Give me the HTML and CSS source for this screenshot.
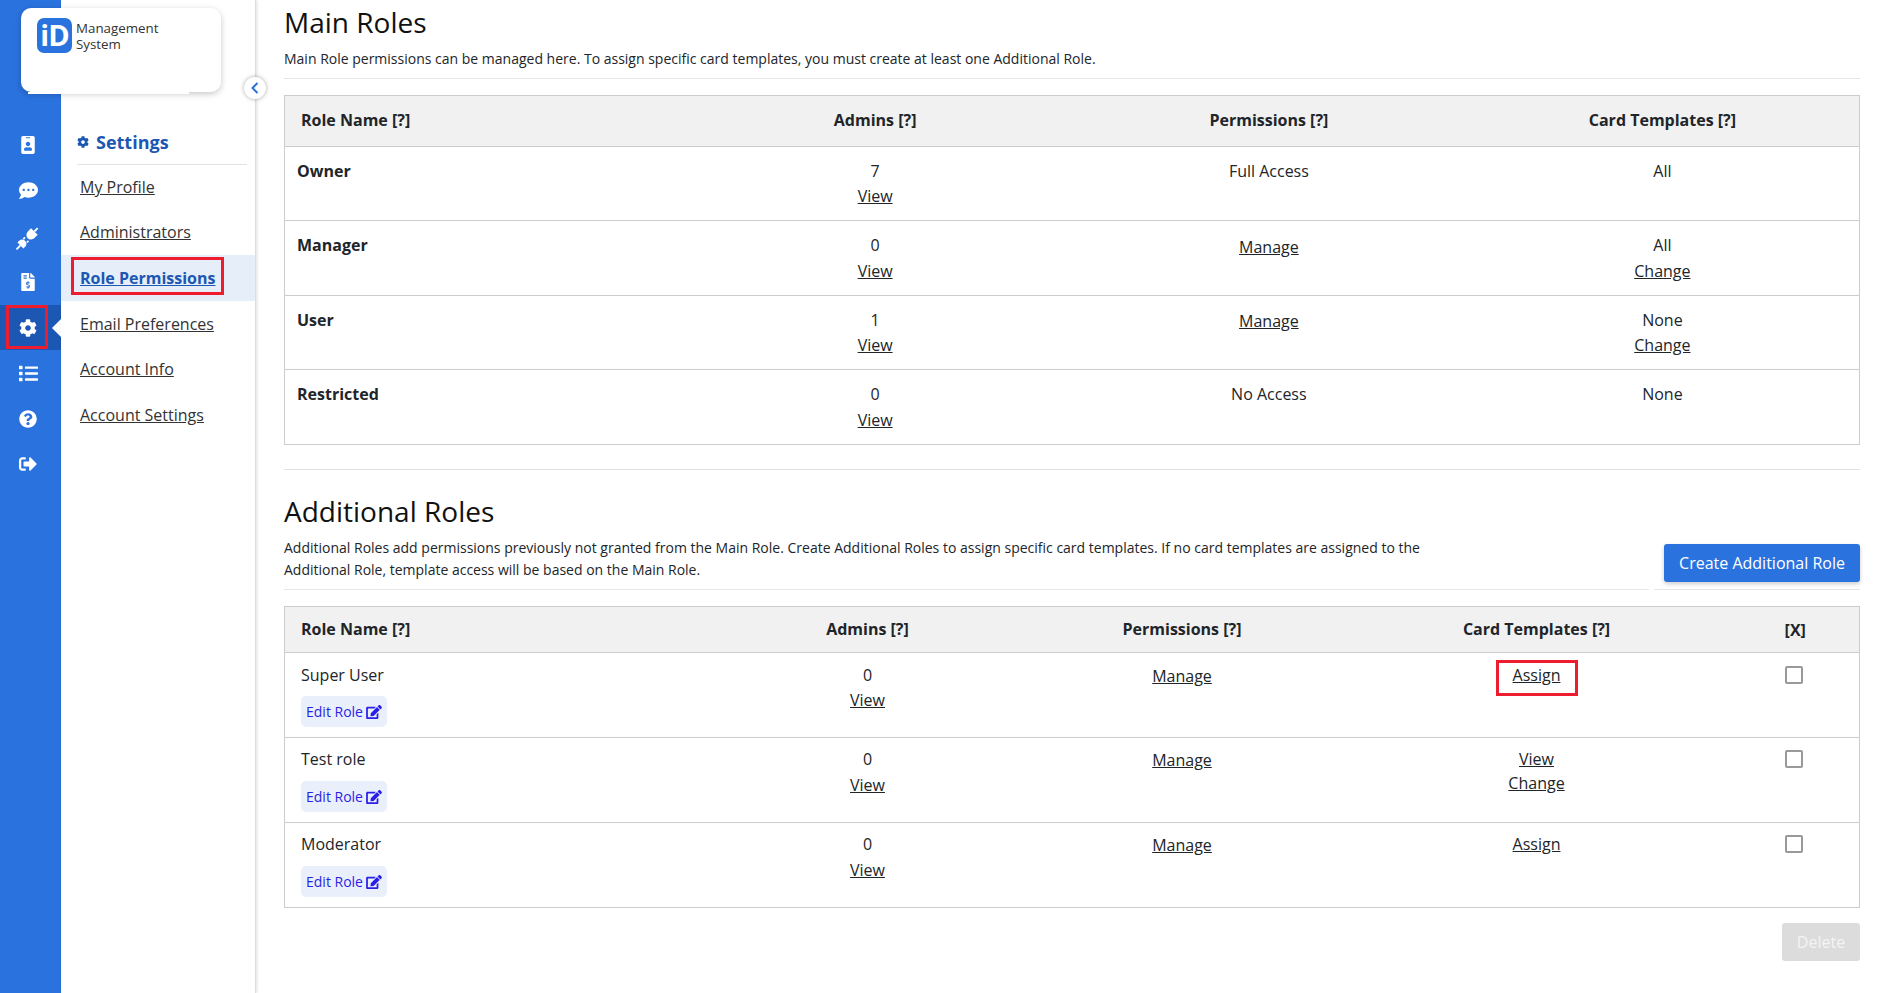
FILE: index.html
```html
<!DOCTYPE html>
<html lang="en">
<head>
<meta charset="utf-8">
<title>Role Permissions</title>
<link rel="stylesheet" href="styles.css">
</head>
<body>
<div class="app">
  <div class="brand">
    <span class="brand-mark">iD</span>
    <span class="brand-name">Management<br>System</span>
  </div>
  <nav class="rail">
    <a class="rail-item"><svg class="ico" viewBox="0 0 384 512"><path d="M336 0H48C21.5 0 0 21.5 0 48v416c0 26.5 21.5 48 48 48h288c26.5 0 48-21.5 48-48V48c0-26.5-21.5-48-48-48zM144 32h96c8.8 0 16 7.2 16 16s-7.2 16-16 16h-96c-8.8 0-16-7.2-16-16s7.2-16 16-16zm48 128c35.3 0 64 28.7 64 64s-28.7 64-64 64-64-28.7-64-64 28.7-64 64-64zm112 236.8c0 10.6-10 19.2-22.4 19.2H102.4C90 416 80 407.4 80 396.8v-19.2c0-31.8 30.1-57.6 67.2-57.6h5c12.3 5.1 25.7 8 39.8 8s27.6-2.9 39.8-8h5c37.1 0 67.2 25.8 67.2 57.6v19.2z"/></svg></a>
    <a class="rail-item"><svg class="ico ico-wide" viewBox="0 0 512 512"><path d="M256 32C114.6 32 0 125.1 0 240c0 49.6 21.4 95 57 130.7C44.5 421.1 2.7 466 2.2 466.5c-2.2 2.3-2.8 5.7-1.5 8.7S4.8 480 8 480c66.3 0 116-31.8 140.6-51.4 32.7 12.3 69 19.4 107.4 19.4 141.4 0 256-93.1 256-208S397.4 32 256 32zM128 272c-17.7 0-32-14.3-32-32s14.3-32 32-32 32 14.3 32 32-14.3 32-32 32zm128 0c-17.7 0-32-14.3-32-32s14.3-32 32-32 32 14.3 32 32-14.3 32-32 32zm128 0c-17.7 0-32-14.3-32-32s14.3-32 32-32 32 14.3 32 32-14.3 32-32 32z"/></svg></a>
    <a class="rail-item"><svg class="ico ico-plug" viewBox="-4 -4 32 32"><g transform="translate(-1 3) rotate(-45 12 12)"><rect x="-4" y="11" width="6" height="2"/><path d="M2 7.5h3c2 0 4 1.500 4 4.500s-2 4.500-4 4.500H2z"/><rect x="9" y="8.500" width="2.500" height="1.800"/><rect x="9" y="13.700" width="2.500" height="1.800"/><path d="M23 7h-4.500c-3 0-5.500 2-5.500 5s2.500 5 5.500 5H23z"/><rect x="23" y="11" width="5" height="2"/></g></svg></a>
    <a class="rail-item"><svg class="ico" viewBox="0 0 384 512"><path d="M377 105L279.1 7c-4.500-4.500-10.600-7-17-7H256v128h128v-6.100c0-6.300-2.500-12.400-7-16.900zm-153 31V0H24C10.700 0 0 10.700 0 24v464c0 13.300 10.700 24 24 24h336c13.300 0 24-10.700 24-24V160H248c-13.200 0-24-10.800-24-24zM64 72c0-4.420 3.580-8 8-8h80c4.420 0 8 3.580 8 8v16c0 4.420-3.580 8-8 8H72c-4.420 0-8-3.580-8-8V72zm0 80v-16c0-4.420 3.580-8 8-8h80c4.420 0 8 3.580 8 8v16c0 4.420-3.580 8-8 8H72c-4.420 0-8-3.580-8-8zm144 263.880V440c0 4.420-3.580 8-8 8h-16c-4.420 0-8-3.580-8-8v-24.290c-11.290-.58-22.270-4.520-31.370-11.350-3.900-2.930-4.100-8.770-.57-12.140l11.750-11.210c2.770-2.640 6.890-2.760 10.130-.73 3.870 2.420 8.260 3.720 12.820 3.720h28.110c6.500 0 11.800-5.920 11.800-13.190 0-5.950-3.610-11.190-8.770-12.730l-45-13.500c-18.590-5.580-31.580-23.420-31.580-43.390 0-24.520 19.050-44.440 42.670-45.070V240c0-4.420 3.580-8 8-8h16c4.420 0 8 3.580 8 8v24.290c11.290.58 22.270 4.510 31.370 11.350 3.900 2.930 4.100 8.770.57 12.140l-11.750 11.210c-2.770 2.640-6.890 2.760-10.130.73-3.870-2.430-8.260-3.720-12.820-3.720h-28.110c-6.500 0-11.800 5.920-11.800 13.190 0 5.950 3.610 11.190 8.770 12.730l45 13.500c18.590 5.580 31.580 23.420 31.580 43.390 0 24.530-19.050 44.440-42.670 45.070z"/></svg></a>
    <a class="rail-item is-active"><svg class="ico" viewBox="0 0 512 512"><path d="M487.400 315.700l-42.600-24.600c4.300-23.200 4.300-47 0-70.200l42.600-24.600c4.900-2.800 7.100-8.600 5.500-14-11.100-35.600-30-67.800-54.700-94.600-3.800-4.100-10-5.100-14.800-2.300L380.800 110c-17.900-15.400-38.500-27.300-60.800-35.100V25.800c0-5.600-3.900-10.500-9.400-11.700-36.700-8.200-74.300-7.800-109.200 0-5.500 1.200-9.400 6.100-9.400 11.700V75c-22.200 7.900-42.800 19.800-60.800 35.100L88.700 85.500c-4.900-2.800-11-1.900-14.800 2.300-24.700 26.700-43.600 58.900-54.700 94.600-1.700 5.400.6 11.200 5.500 14L67.300 221c-4.300 23.200-4.300 47 0 70.200l-42.600 24.600c-4.900 2.800-7.100 8.600-5.500 14 11.100 35.600 30 67.800 54.700 94.600 3.800 4.100 10 5.100 14.800 2.300l42.600-24.600c17.900 15.400 38.500 27.300 60.800 35.100v49.200c0 5.600 3.900 10.500 9.400 11.700 36.700 8.200 74.300 7.800 109.200 0 5.500-1.200 9.400-6.100 9.400-11.700v-49.200c22.200-7.900 42.800-19.800 60.800-35.100l42.600 24.600c4.900 2.800 11 1.900 14.800-2.300 24.700-26.700 43.600-58.900 54.700-94.600 1.500-5.500-.7-11.300-5.600-14.100zM256 336c-44.100 0-80-35.900-80-80s35.900-80 80-80 80 35.900 80 80-35.900 80-80 80z"/></svg></a>
    <a class="rail-item"><svg class="ico ico-wide" viewBox="0 0 512 512"><path d="M80 368H16a16 16 0 0 0-16 16v64a16 16 0 0 0 16 16h64a16 16 0 0 0 16-16v-64a16 16 0 0 0-16-16zm0-320H16A16 16 0 0 0 0 64v64a16 16 0 0 0 16 16h64a16 16 0 0 0 16-16V64a16 16 0 0 0-16-16zm0 160H16a16 16 0 0 0-16 16v64a16 16 0 0 0 16 16h64a16 16 0 0 0 16-16v-64a16 16 0 0 0-16-16zm416 176H176a16 16 0 0 0-16 16v32a16 16 0 0 0 16 16h320a16 16 0 0 0 16-16v-32a16 16 0 0 0-16-16zm0-320H176a16 16 0 0 0-16 16v32a16 16 0 0 0 16 16h320a16 16 0 0 0 16-16V80a16 16 0 0 0-16-16zm0 160H176a16 16 0 0 0-16 16v32a16 16 0 0 0 16 16h320a16 16 0 0 0 16-16v-32a16 16 0 0 0-16-16z"/></svg></a>
    <a class="rail-item"><svg class="ico" viewBox="0 0 512 512"><path d="M504 256c0 136.997-111.043 248-248 248S8 392.997 8 256C8 119.083 119.043 8 256 8s248 111.083 248 248zM262.655 90c-54.497 0-89.255 22.957-116.549 63.758-3.536 5.286-2.353 12.415 2.715 16.258l34.699 26.310c5.205 3.947 12.621 3.008 16.665-2.122 17.864-22.658 30.113-35.797 57.303-35.797 20.429 0 45.698 13.148 45.698 32.958 0 14.976-12.363 22.667-32.534 33.976C247.128 238.528 216 254.941 216 296v4c0 6.627 5.373 12 12 12h56c6.627 0 12-5.373 12-12v-1.333c0-28.462 83.186-29.647 83.186-106.667 0-58.002-60.165-102-116.531-102zM256 338c-25.365 0-46 20.635-46 46 0 25.364 20.635 46 46 46s46-20.636 46-46c0-25.365-20.635-46-46-46z"/></svg></a>
    <a class="rail-item"><svg class="ico" viewBox="0 0 512 512"><path d="M497 273L329 441c-15 15-41 4.500-41-17v-96H152c-13.300 0-24-10.700-24-24v-96c0-13.300 10.700-24 24-24h136V88c0-21.400 25.900-32 41-17l168 168c9.300 9.400 9.300 24.600 0 34zM192 436v-40c0-6.600-5.400-12-12-12H96c-17.700 0-32-14.300-32-32V160c0-17.700 14.300-32 32-32h84c6.600 0 12-5.400 12-12V76c0-6.600-5.400-12-12-12H96c-53 0-96 43-96 96v192c0 53 43 96 96 96h84c6.600 0 12-5.400 12-12z"/></svg></a>
  </nav>

  <aside class="subnav">
    <button class="collapse" type="button" aria-label="Collapse"><svg viewBox="0 0 10 14"><path d="M7.500 2 2.500 7l5 5"/></svg></button>
    <h2 class="subnav-title"><svg class="title-ico" viewBox="0 0 512 512"><path d="M487.400 315.700l-42.600-24.600c4.300-23.200 4.300-47 0-70.200l42.600-24.600c4.900-2.800 7.100-8.600 5.500-14-11.100-35.600-30-67.800-54.700-94.600-3.800-4.100-10-5.100-14.800-2.300L380.800 110c-17.900-15.400-38.500-27.300-60.800-35.100V25.800c0-5.600-3.900-10.500-9.400-11.700-36.700-8.200-74.300-7.800-109.200 0-5.500 1.200-9.400 6.100-9.400 11.700V75c-22.200 7.900-42.800 19.800-60.800 35.100L88.700 85.500c-4.900-2.800-11-1.900-14.800 2.300-24.700 26.700-43.600 58.900-54.700 94.600-1.700 5.400.6 11.200 5.500 14L67.300 221c-4.300 23.200-4.300 47 0 70.200l-42.600 24.600c-4.900 2.800-7.100 8.600-5.500 14 11.100 35.600 30 67.800 54.700 94.600 3.800 4.100 10 5.100 14.800 2.300l42.600-24.600c17.900 15.400 38.500 27.300 60.800 35.100v49.200c0 5.600 3.900 10.500 9.400 11.700 36.700 8.200 74.300 7.800 109.200 0 5.500-1.200 9.400-6.100 9.400-11.700v-49.200c22.200-7.900 42.800-19.800 60.800-35.100l42.600 24.600c4.900 2.800 11 1.900 14.800-2.300 24.700-26.700 43.600-58.900 54.700-94.600 1.500-5.500-.7-11.300-5.600-14.100zM256 336c-44.100 0-80-35.900-80-80s35.900-80 80-80 80 35.900 80 80-35.900 80-80 80z"/></svg>Settings</h2>
    <ul class="subnav-list">
      <li class="subnav-item"><a href="#">My Profile</a></li>
      <li class="subnav-item"><a href="#">Administrators</a></li>
      <li class="subnav-item is-current"><a href="#">Role Permissions</a></li>
      <li class="subnav-item"><a href="#">Email Preferences</a></li>
      <li class="subnav-item"><a href="#">Account Info</a></li>
      <li class="subnav-item"><a href="#">Account Settings</a></li>
    </ul>
  </aside>

  <main class="main">
    <h1 class="title title-first">Main Roles</h1>
    <p class="lead lead-first">Main Role permissions can be managed here. To assign specific card templates, you must create at least one Additional Role.</p>

    <table class="grid grid-main">
      <thead>
        <tr><th class="name">Role Name [?]</th><th>Admins [?]</th><th>Permissions [?]</th><th>Card Templates [?]</th></tr>
      </thead>
      <tbody>
        <tr>
          <td class="role">Owner</td>
          <td>7<a class="line" href="#">View</a></td>
          <td>Full Access</td>
          <td>All</td>
        </tr>
        <tr>
          <td class="role">Manager</td>
          <td>0<a class="line" href="#">View</a></td>
          <td><a class="line low" href="#">Manage</a></td>
          <td>All<a class="line" href="#">Change</a></td>
        </tr>
        <tr>
          <td class="role">User</td>
          <td>1<a class="line" href="#">View</a></td>
          <td><a class="line low" href="#">Manage</a></td>
          <td>None<a class="line" href="#">Change</a></td>
        </tr>
        <tr>
          <td class="role">Restricted</td>
          <td>0<a class="line" href="#">View</a></td>
          <td>No Access</td>
          <td>None</td>
        </tr>
      </tbody>
    </table>

    <hr class="divider">

    <h2 class="title">Additional Roles</h2>
    <div class="intro">
      <p class="lead intro-text">Additional Roles add permissions previously not granted from the Main Role. Create Additional Roles to assign specific card templates. If no card templates are assigned to the Additional Role, template access will be based on the Main Role.</p>
      <div class="intro-action"><button class="btn btn-primary" type="button">Create Additional Role</button></div>
    </div>

    <table class="grid grid-extra">
      <thead>
        <tr><th class="name">Role Name [?]</th><th>Admins [?]</th><th>Permissions [?]</th><th>Card Templates [?]</th><th class="x">[X]</th></tr>
      </thead>
      <tbody>
        <tr>
          <td class="name">Super User<a class="edit" href="#">Edit Role<svg class="edit-ico" viewBox="0 0 576 512"><path d="M402.600 83.200l90.200 90.200c3.800 3.800 3.800 10 0 13.800L274.400 405.600l-92.800 10.300c-12.400 1.400-22.900-9.100-21.500-21.500l10.300-92.800L388.800 83.200c3.800-3.800 10-3.800 13.800 0zm162-22.900l-48.800-48.800c-15.200-15.200-39.900-15.200-55.200 0l-35.400 35.400c-3.800 3.800-3.800 10 0 13.800l90.200 90.200c3.800 3.800 10 3.800 13.800 0l35.400-35.400c15.200-15.300 15.200-40 0-55.200zM384 346.200V448H64V128h229.800c3.200 0 6.200-1.300 8.500-3.500l40-40c7.600-7.600 2.200-20.500-8.500-20.500H48C21.500 64 0 85.500 0 112v352c0 26.500 21.500 48 48 48h352c26.500 0 48-21.500 48-48V306.200c0-10.700-12.900-16-20.500-8.500l-40 40c-2.200 2.300-3.500 5.300-3.500 8.500z"/></svg></a></td>
          <td>0<a class="line" href="#">View</a></td>
          <td><a class="line low" href="#">Manage</a></td>
          <td><a class="marked" href="#">Assign</a></td>
          <td class="x"><input class="check" type="checkbox" aria-label="Select Super User"></td>
        </tr>
        <tr>
          <td class="name">Test role<a class="edit" href="#">Edit Role<svg class="edit-ico" viewBox="0 0 576 512"><path d="M402.600 83.200l90.200 90.200c3.800 3.800 3.800 10 0 13.800L274.400 405.600l-92.800 10.300c-12.400 1.400-22.900-9.100-21.500-21.500l10.300-92.800L388.800 83.200c3.800-3.800 10-3.800 13.800 0zm162-22.900l-48.800-48.800c-15.200-15.200-39.900-15.200-55.200 0l-35.400 35.400c-3.800 3.800-3.800 10 0 13.800l90.200 90.200c3.800 3.800 10 3.800 13.800 0l35.400-35.400c15.200-15.300 15.200-40 0-55.200zM384 346.200V448H64V128h229.800c3.200 0 6.200-1.300 8.500-3.500l40-40c7.600-7.600 2.200-20.500-8.500-20.500H48C21.500 64 0 85.500 0 112v352c0 26.500 21.500 48 48 48h352c26.500 0 48-21.500 48-48V306.200c0-10.700-12.900-16-20.500-8.500l-40 40c-2.200 2.300-3.500 5.300-3.500 8.500z"/></svg></a></td>
          <td>0<a class="line" href="#">View</a></td>
          <td><a class="line low" href="#">Manage</a></td>
          <td><a class="line" href="#">View</a><a class="line" href="#">Change</a></td>
          <td class="x"><input class="check" type="checkbox" aria-label="Select Test role"></td>
        </tr>
        <tr>
          <td class="name">Moderator<a class="edit" href="#">Edit Role<svg class="edit-ico" viewBox="0 0 576 512"><path d="M402.600 83.200l90.200 90.200c3.800 3.800 3.800 10 0 13.800L274.400 405.600l-92.800 10.300c-12.400 1.400-22.900-9.100-21.500-21.500l10.300-92.800L388.800 83.200c3.800-3.800 10-3.800 13.800 0zm162-22.900l-48.800-48.800c-15.200-15.200-39.900-15.200-55.200 0l-35.400 35.400c-3.800 3.800-3.800 10 0 13.800l90.200 90.200c3.800 3.800 10 3.800 13.800 0l35.400-35.400c15.200-15.300 15.200-40 0-55.200zM384 346.200V448H64V128h229.800c3.200 0 6.200-1.300 8.500-3.500l40-40c7.600-7.600 2.200-20.500-8.500-20.500H48C21.500 64 0 85.500 0 112v352c0 26.500 21.500 48 48 48h352c26.500 0 48-21.500 48-48V306.200c0-10.700-12.900-16-20.500-8.500l-40 40c-2.200 2.300-3.500 5.300-3.500 8.500z"/></svg></a></td>
          <td>0<a class="line" href="#">View</a></td>
          <td><a class="line low" href="#">Manage</a></td>
          <td><a class="inline-link" href="#">Assign</a></td>
          <td class="x"><input class="check" type="checkbox" aria-label="Select Moderator"></td>
        </tr>
      </tbody>
    </table>

    <div class="actions"><button class="btn btn-disabled" type="button">Delete</button></div>
  </main>
</div>
</body>
</html>
```

FILE: styles.css
```css
*, *::before, *::after { box-sizing: border-box; }
html, body { height: 100%; }
body {
  margin: 0;
  background: #fff;
  color: #212529;
  font-family: "Open Sans", "Liberation Sans", sans-serif;
  font-size: 16px;
  overflow: hidden;
}
a { color: inherit; }

.app { display: flex; height: 993px; position: relative; }

/* logo card */
.brand {
  position: absolute;
  left: 21px;
  top: 8px;
  width: 200px;
  height: 84px;
  padding: 10px 16px;
  display: flex;
  gap: 4px;
  background: #fff;
  border-radius: 10px;
  box-shadow: 0 2px 6px rgba(0, 0, 0, .22);
  z-index: 3;
}
.brand::after {
  content: "";
  position: absolute;
  left: 7px;
  width: 161px;
  bottom: -2px;
  height: 2px;
  background: #fff;
}
.brand-mark {
  width: 35px;
  height: 35px;
  flex: none;
  background: #2a72de;
  border-radius: 7px;
  color: #fff;
  font-size: 29px;
  font-weight: 700;
  line-height: 34px;
  text-align: center;
  letter-spacing: -1px;
}
.brand-name { font-size: 13.33px; line-height: 16px; color: #333; padding-top: 2px; }

/* icon rail */
.rail {
  flex: none;
  width: 61px;
  padding-top: 122.5px;
  background: #2a72de;
  display: flex;
  flex-direction: column;
}
.rail-item {
  position: relative;
  height: 45.6px;
  display: flex;
  align-items: center;
  justify-content: center;
  padding-right: 5px;
}
.ico { flex: none; width: 18px; height: 18px; fill: #fff; }
.ico-wide { width: 19px; height: 19px; }
.ico-plug { width: 30px; height: 30px; }
.rail-item.is-active { background: #1b57b3; }
.rail-item.is-active::before {
  content: "";
  position: absolute;
  right: 0;
  top: 14px;
  border: 9px solid transparent;
  border-right-color: #fff;
  border-left-width: 0;
}
.rail-item.is-active::after {
  content: "";
  position: absolute;
  left: 6px;
  top: 0;
  width: 42px;
  height: 44px;
  border: 3px solid #ed1c2e;
}

/* settings column */
.subnav {
  position: relative;
  flex: none;
  width: 195px;
  padding-top: 127px;
  background: #fff;
  border-right: 1px solid #ddd;
  box-shadow: 1px 0 3px rgba(0, 0, 0, .12);
}
.collapse {
  position: absolute;
  right: -11px;
  top: 77px;
  width: 22px;
  height: 22px;
  padding: 0;
  display: flex;
  align-items: center;
  justify-content: center;
  background: #fff;
  border: 0;
  border-radius: 50%;
  box-shadow: 0 0 4px rgba(0, 0, 0, .35);
}
.collapse svg { width: 10px; height: 14px; fill: none; stroke: #2a72de; stroke-width: 2; }
.subnav-title {
  margin: 0 8px -1px 16px;
  height: 38px;
  padding-bottom: 8px;
  display: flex;
  align-items: center;
  gap: 7px;
  border-bottom: 1px solid #e2e2e2;
  color: #1b57b3;
  font-size: 18px;
  font-weight: 700;
}
.title-ico { width: 12px; height: 12px; fill: #1b57b3; }
.subnav-list { list-style: none; margin: 0; padding: 0; }
.subnav-item {
  height: 45.6px;
  padding-left: 19px;
  display: flex;
  align-items: center;
  color: #333;
  position: relative;
}
.subnav-item.is-current { background: #e6eef9; color: #1b57b3; font-weight: 700; }
.subnav-item.is-current::after {
  content: "";
  position: absolute;
  left: 10px;
  top: 2px;
  width: 153px;
  height: 38px;
  border: 3px solid #ed1c2e;
}

/* main */
.main { flex: 1; min-width: 0; padding: 3px 24px 0 28px; }
.title { margin: 0; font-size: 28px; font-weight: 400; line-height: 38px; color: #111; }
.lead { margin: 0; font-size: 14px; line-height: 22px; color: #212529; }
.lead-first {
  margin-top: 7px;
  padding-bottom: 8px;
  border-bottom: 1px solid #e6e6e6;
  margin-bottom: 16px;
}

.grid {
  width: 100%;
  table-layout: fixed;
  border-collapse: collapse;
  border: 1px solid #ccc;
  line-height: 24px;
}
.grid th {
  background: #f1f1f1;
  font-weight: 700;
  text-align: center;
  vertical-align: middle;
  border-bottom: 1px solid #ccc;
  padding: 0 16px;
}
.grid td {
  text-align: center;
  vertical-align: top;
  border-bottom: 1px solid #ccc;
  padding: 0;
}
.grid .name { text-align: left; }
.line { display: block; }
.low { position: relative; top: 2px; }

.grid-main th { height: 51px; padding-bottom: 2px; }
.grid-main td { padding: 12px 10px 0; line-height: 25px; height: 75px; }
.grid-main tbody tr:nth-child(odd) td { height: 74px; }
.grid-main tbody tr:nth-child(even) .line { margin-top: 1px; }
.grid-main tbody tr:nth-child(even) .low { margin-top: 0; }
.grid-main tbody tr:nth-child(3) .low { top: 1px; }
.grid-main th:nth-child(1) { width: 25%; }
.grid-main td.role { text-align: left; font-weight: 700; padding-left: 12px; }

.divider {
  height: 1px;
  margin: 24px 0 22px;
  border: 0;
  background: #e2e2e2;
}

.intro { display: flex; gap: 5px; margin-top: 6px; margin-bottom: 16px; }
.intro-text {
  flex: 1;
  padding: 1px 195px 8px 0;
  border-bottom: 1px solid #e6e6e6;
}
.intro-action {
  flex: none;
  width: 206px;
  padding: 8px 0 7px 10px;
  border-bottom: 1px solid #e6e6e6;
}

.btn {
  height: 38px;
  border: 0;
  border-radius: 3px;
  font-family: inherit;
  font-size: 16px;
}
.btn-primary {
  width: 196px;
  background: #2a72de;
  color: #fff;
  box-shadow: 0 2px 4px rgba(0, 0, 0, .2);
}
.btn-disabled { width: 78px; background: #dcdcdc; color: #f4f4f4; }

.grid-extra th { height: 46px; padding-bottom: 1px; }
.grid-extra td { padding: 10px 0; height: 85px; }
.grid-extra td.name { padding-left: 16px; }
.grid-extra tbody tr:not(:first-child) td { padding-top: 9px; }
.grid-extra tbody tr:not(:first-child) .edit { margin-top: 10px; }
.grid-extra td:nth-child(2) .line { margin-top: 1px; }
.grid-extra tbody tr:not(:first-child) td:nth-child(2) .line { margin-top: 2px; }
.grid-extra .low { top: 1px; }
.grid-extra th:nth-child(1) { width: 428px; }
.grid-extra th:nth-child(2) { width: 310px; }
.grid-extra th:nth-child(3) { width: 319px; }
.grid-extra th:nth-child(4) { width: 390px; }
.grid-extra th.x { padding: 0; }

.edit {
  display: flex;
  align-items: center;
  gap: 3px;
  width: 86px;
  height: 31px;
  margin-top: 9px;
  padding-left: 5px;
  background: #e9f0fc;
  border-radius: 5px;
  color: #2a1fe6;
  font-size: 14px;
  text-decoration: none;
}
.edit-ico { width: 16px; height: 14px; fill: #2a1fe6; }

.marked { position: relative; display: inline-block; }
.marked::after {
  content: "";
  position: absolute;
  left: -17px;
  right: -18px;
  top: -3px;
  bottom: -9px;
  border: 3px solid #ed1c2e;
}

.check {
  appearance: none;
  display: block;
  width: 18px;
  height: 18px;
  margin: 3px auto 0;
  position: relative;
  left: -1px;
  border: 2px solid #999;
  border-radius: 2px;
  background: #fff;
}

.actions { display: flex; justify-content: flex-end; margin-top: 15px; }
```
